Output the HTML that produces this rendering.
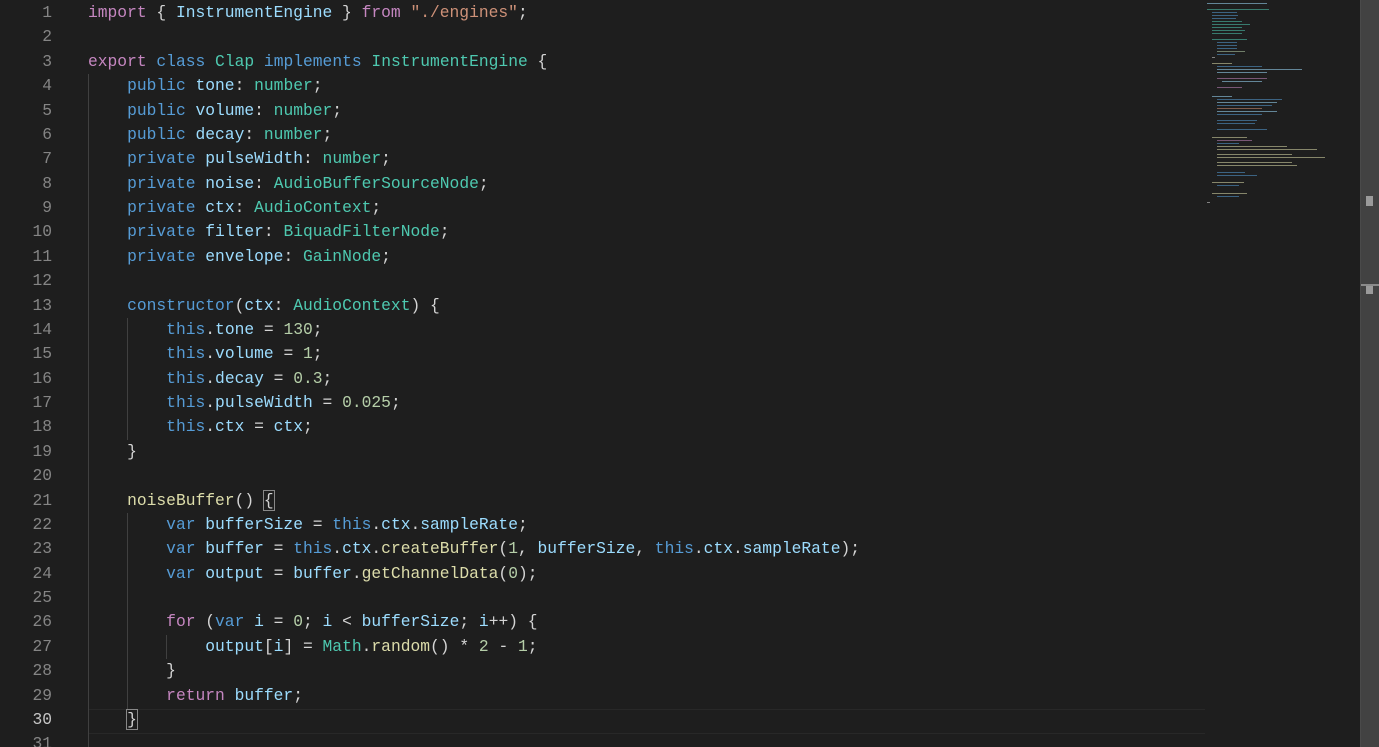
<!DOCTYPE html><html><head><style>
html,body{margin:0;width:1379px;height:747px;overflow:hidden}
body{background:#1e1e1e;position:relative;font-family:"Liberation Mono",monospace}
.g{position:absolute;left:0;top:1px;width:52px;text-align:right;color:#858585;font-size:16.3px;line-height:24.38px}
.c{position:absolute;left:88px;top:1px;font-size:16.3px;line-height:24.38px;color:#d4d4d4;white-space:pre}
.k{color:#c586c0}.b{color:#569cd6}.t{color:#4ec9b0}.v{color:#9cdcfe}.s{color:#ce9178}.n{color:#b5cea8}.f{color:#dcdcaa}
.ig{position:absolute;width:1px;background:#404040}
.sb{position:absolute;left:1360px;top:0;width:19px;height:747px;background:#424242;border-left:1px solid #4a4a4a}
.mm div{position:absolute;height:1px;opacity:.55}
</style></head><body>
<div style="position:absolute;left:88px;top:709px;width:1117px;height:23px;border-top:1px solid #282828;border-bottom:1px solid #282828"></div>
<div class="ig" style="left:88px;top:74px;height:673px"></div>
<div class="ig" style="left:127px;top:318px;height:122px"></div>
<div class="ig" style="left:127px;top:513px;height:196px"></div>
<div class="ig" style="left:166px;top:635px;height:24px"></div>
<div class="g">1<br>2<br>3<br>4<br>5<br>6<br>7<br>8<br>9<br>10<br>11<br>12<br>13<br>14<br>15<br>16<br>17<br>18<br>19<br>20<br>21<br>22<br>23<br>24<br>25<br>26<br>27<br>28<br>29<br><span style="color:#c6c6c6">30</span><br>31</div>
<div class="c"><span class="k">import</span> { <span class="v">InstrumentEngine</span> } <span class="k">from</span> <span class="s">"./engines"</span>;

<span class="k">export</span> <span class="b">class</span> <span class="t">Clap</span> <span class="b">implements</span> <span class="t">InstrumentEngine</span> {
    <span class="b">public</span> <span class="v">tone</span>: <span class="t">number</span>;
    <span class="b">public</span> <span class="v">volume</span>: <span class="t">number</span>;
    <span class="b">public</span> <span class="v">decay</span>: <span class="t">number</span>;
    <span class="b">private</span> <span class="v">pulseWidth</span>: <span class="t">number</span>;
    <span class="b">private</span> <span class="v">noise</span>: <span class="t">AudioBufferSourceNode</span>;
    <span class="b">private</span> <span class="v">ctx</span>: <span class="t">AudioContext</span>;
    <span class="b">private</span> <span class="v">filter</span>: <span class="t">BiquadFilterNode</span>;
    <span class="b">private</span> <span class="v">envelope</span>: <span class="t">GainNode</span>;

    <span class="b">constructor</span>(<span class="v">ctx</span>: <span class="t">AudioContext</span>) {
        <span class="b">this</span>.<span class="v">tone</span> = <span class="n">130</span>;
        <span class="b">this</span>.<span class="v">volume</span> = <span class="n">1</span>;
        <span class="b">this</span>.<span class="v">decay</span> = <span class="n">0.3</span>;
        <span class="b">this</span>.<span class="v">pulseWidth</span> = <span class="n">0.025</span>;
        <span class="b">this</span>.<span class="v">ctx</span> = <span class="v">ctx</span>;
    }

    <span class="f">noiseBuffer</span>() <span style="outline:1px solid #888">{</span>
        <span class="b">var</span> <span class="v">bufferSize</span> = <span class="b">this</span>.<span class="v">ctx</span>.<span class="v">sampleRate</span>;
        <span class="b">var</span> <span class="v">buffer</span> = <span class="b">this</span>.<span class="v">ctx</span>.<span class="f">createBuffer</span>(<span class="n">1</span>, <span class="v">bufferSize</span>, <span class="b">this</span>.<span class="v">ctx</span>.<span class="v">sampleRate</span>);
        <span class="b">var</span> <span class="v">output</span> = <span class="v">buffer</span>.<span class="f">getChannelData</span>(<span class="n">0</span>);

        <span class="k">for</span> (<span class="b">var</span> <span class="v">i</span> = <span class="n">0</span>; <span class="v">i</span> &lt; <span class="v">bufferSize</span>; <span class="v">i</span>++) {
            <span class="v">output</span>[<span class="v">i</span>] = <span class="t">Math</span>.<span class="f">random</span>() * <span class="n">2</span> - <span class="n">1</span>;
        }
        <span class="k">return</span> <span class="v">buffer</span>;
    <span style="outline:1px solid #888">}</span>
</div>
<div class="mm">
<div style="left:1207px;top:3px;width:60px;background:#9cdcfe"></div>
<div style="left:1207px;top:9px;width:62px;background:#4ec9b0"></div>
<div style="left:1212px;top:12px;width:25px;background:#569cd6"></div>
<div style="left:1212px;top:15px;width:26px;background:#569cd6"></div>
<div style="left:1212px;top:18px;width:24px;background:#569cd6"></div>
<div style="left:1212px;top:21px;width:30px;background:#4ec9b0"></div>
<div style="left:1212px;top:24px;width:38px;background:#4ec9b0"></div>
<div style="left:1212px;top:27px;width:30px;background:#4ec9b0"></div>
<div style="left:1212px;top:30px;width:33px;background:#4ec9b0"></div>
<div style="left:1212px;top:33px;width:30px;background:#4ec9b0"></div>
<div style="left:1212px;top:39px;width:35px;background:#4ec9b0"></div>
<div style="left:1217px;top:42px;width:20px;background:#569cd6"></div>
<div style="left:1217px;top:45px;width:20px;background:#569cd6"></div>
<div style="left:1217px;top:48px;width:20px;background:#569cd6"></div>
<div style="left:1217px;top:51px;width:28px;background:#b5cea8"></div>
<div style="left:1217px;top:54px;width:18px;background:#569cd6"></div>
<div style="left:1212px;top:57px;width:3px;background:#d4d4d4"></div>
<div style="left:1212px;top:63px;width:20px;background:#dcdcaa"></div>
<div style="left:1217px;top:66px;width:45px;background:#569cd6"></div>
<div style="left:1217px;top:69px;width:85px;background:#9cdcfe"></div>
<div style="left:1217px;top:72px;width:50px;background:#9cdcfe"></div>
<div style="left:1217px;top:78px;width:50px;background:#c586c0"></div>
<div style="left:1222px;top:81px;width:40px;background:#9cdcfe"></div>
<div style="left:1217px;top:87px;width:25px;background:#c586c0"></div>
<div style="left:1212px;top:96px;width:20px;background:#9cdcfe"></div>
<div style="left:1217px;top:99px;width:65px;background:#569cd6"></div>
<div style="left:1217px;top:102px;width:60px;background:#9cdcfe"></div>
<div style="left:1217px;top:105px;width:55px;background:#569cd6"></div>
<div style="left:1217px;top:108px;width:45px;background:#ce9178"></div>
<div style="left:1217px;top:111px;width:60px;background:#9cdcfe"></div>
<div style="left:1217px;top:114px;width:45px;background:#569cd6"></div>
<div style="left:1217px;top:120px;width:40px;background:#569cd6"></div>
<div style="left:1217px;top:123px;width:38px;background:#569cd6"></div>
<div style="left:1217px;top:129px;width:50px;background:#569cd6"></div>
<div style="left:1212px;top:137px;width:35px;background:#dcdcaa"></div>
<div style="left:1217px;top:140px;width:35px;background:#c586c0"></div>
<div style="left:1217px;top:143px;width:22px;background:#569cd6"></div>
<div style="left:1217px;top:146px;width:70px;background:#dcdcaa"></div>
<div style="left:1217px;top:149px;width:100px;background:#dcdcaa"></div>
<div style="left:1217px;top:154px;width:75px;background:#dcdcaa"></div>
<div style="left:1217px;top:157px;width:108px;background:#dcdcaa"></div>
<div style="left:1217px;top:162px;width:75px;background:#dcdcaa"></div>
<div style="left:1217px;top:165px;width:80px;background:#dcdcaa"></div>
<div style="left:1217px;top:172px;width:28px;background:#569cd6"></div>
<div style="left:1217px;top:175px;width:40px;background:#569cd6"></div>
<div style="left:1212px;top:182px;width:32px;background:#dcdcaa"></div>
<div style="left:1217px;top:185px;width:22px;background:#569cd6"></div>
<div style="left:1212px;top:193px;width:35px;background:#dcdcaa"></div>
<div style="left:1217px;top:196px;width:22px;background:#569cd6"></div>
<div style="left:1207px;top:202px;width:3px;background:#d4d4d4"></div>
</div>
<div class="sb"></div>
<div style="position:absolute;left:1366px;top:196px;width:7px;height:10px;background:#9a9a9a"></div>
<div style="position:absolute;left:1361px;top:284px;width:18px;height:2px;background:#8a8a8a"></div>
<div style="position:absolute;left:1366px;top:286px;width:7px;height:8px;background:#9a9a9a"></div>
</body></html>
